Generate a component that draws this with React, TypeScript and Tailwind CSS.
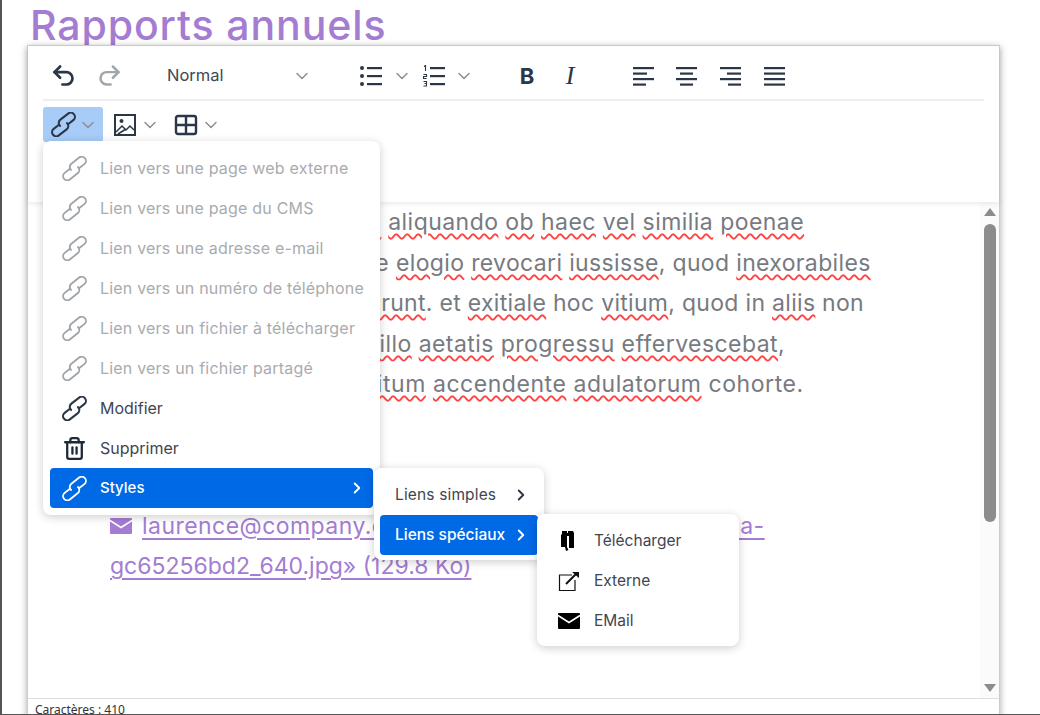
import { ChevronDown, ChevronRight, Redo2, Trash2, Undo2 } from "lucide-react";

const disabledLinks = [
  "Lien vers une page web externe",
  "Lien vers une page du CMS",
  "Lien vers une adresse e-mail",
  "Lien vers un numéro de téléphone",
  "Lien vers un fichier à télécharger",
  "Lien vers un fichier partagé",
];

function Chevron({ className = "" }: { className?: string }) {
  return <ChevronDown size={20} strokeWidth={1.75} className={"shrink-0 text-[#8a8f96] " + className} />;
}

// chain drawn flat, then turned on the diagonal
function LinkIcon({ className = "", strokeWidth = 2 }: { className?: string; strokeWidth?: number }) {
  return (
    <svg width="25" height="25" viewBox="0 0 24 24" fill="none" stroke="currentColor" strokeWidth={strokeWidth} strokeLinecap="round" className={"shrink-0 " + className}>
      <g transform="rotate(-38 12 12)">
        <path d="M8 9.5H2a4 4 0 0 0 0 8h9.5a4 4 0 0 0 4-4V13" />
        <path d="M16 14.5h6a4 4 0 0 0 0-8H12.5a4 4 0 0 0-4 4v.5" />
      </g>
    </svg>
  );
}

function BulletIcon() {
  return (
    <svg width="24" height="22" viewBox="0 0 24 22" fill="#2b3746" className="shrink-0">
      <circle cx="3" cy="3" r="2" />
      <circle cx="3" cy="11" r="2" />
      <circle cx="3" cy="19" r="2" />
      <rect x="8" y="2" width="15" height="2.2" />
      <rect x="8" y="10" width="15" height="2.2" />
      <rect x="8" y="18" width="15" height="2.2" />
    </svg>
  );
}

function NumberIcon() {
  return (
    <svg width="24" height="22" viewBox="0 0 24 22" className="shrink-0">
      <path d="M2 1.5l1.5-1V6M1.5 9.5h3v2h-3v2h3M1.5 16.5h3v2h-2 2v2.5h-3" fill="none" stroke="#2b3746" strokeWidth="1.1" />
      <rect x="8" y="2" width="15" height="2.2" fill="#2b3746" />
      <rect x="8" y="10" width="15" height="2.2" fill="#2b3746" />
      <rect x="8" y="18" width="15" height="2.2" fill="#2b3746" />
    </svg>
  );
}

// four bars, x offsets change with the alignment
function AlignIcon({ bars, className = "" }: { bars: [number, number][]; className?: string }) {
  return (
    <svg width="22" height="20" viewBox="0 0 22 20" className={"shrink-0 text-[#2b3746] " + className}>
      {bars.map(([x, w], i) => (
        <rect key={i} x={x} y={1 + i * 5.5} width={w} height="2.2" fill="currentColor" />
      ))}
    </svg>
  );
}

function ImageIcon() {
  return (
    <svg width="24" height="24" viewBox="0 0 24 24" fill="none" stroke="#2b3746" strokeWidth="2" className="shrink-0">
      <rect x="2" y="2" width="20" height="20" />
      <circle cx="8.5" cy="8" r="2" fill="#2b3746" stroke="none" />
      <path d="M3 19l6-6 4 4 4-4 4 4M5 21l8-5" strokeWidth="1.5" />
    </svg>
  );
}

function TableIcon() {
  return (
    <svg width="24" height="24" viewBox="0 0 24 24" fill="none" stroke="#2b3746" strokeWidth="2.4" className="shrink-0">
      <rect x="2" y="3" width="20" height="18" rx="2" />
      <path d="M2 12h20M12 3v18" />
    </svg>
  );
}

function DownloadIcon() {
  return (
    <svg width="20" height="20" viewBox="0 0 20 20" className="shrink-0">
      <path d="M4 0h5v2h1V0h5l1 2v15h-5V5H9v11l1.5 3-2.5 1-1-4H3V4l1-1z" fill="#000" />
    </svg>
  );
}

function ExternalIcon() {
  return (
    <svg width="22" height="22" viewBox="0 0 22 22" fill="none" stroke="#111" className="shrink-0">
      <path d="M14 5H1.5v15.5H17V10" strokeWidth="1.2" />
      <path d="M8 14L18 4" strokeWidth="2" />
      <path d="M14 2h7v6z" fill="#111" stroke="none" />
    </svg>
  );
}

function MailIcon({ color, className = "" }: { color: string; className?: string }) {
  return (
    <svg width="22" height="16" viewBox="0 0 22 16" className={"shrink-0 " + className}>
      <rect width="22" height="16" rx="1" fill={color} />
      <path d="M0 2.5l11 7 11-7" fill="none" stroke="#fff" strokeWidth="1.6" />
    </svg>
  );
}

function Wavy({ children }: { children: string }) {
  return <span className="underline decoration-wavy decoration-[#f44] decoration-[1.5px] underline-offset-[3px]">{children}</span>;
}

export default function App() {
  return (
    <div className="relative h-[715px] w-[1040px] overflow-hidden border-b border-l-2 border-[#555] bg-white font-['Inter',sans-serif]">
      <h1 className="h-[45px] pl-[28px] text-[41px] leading-[50px] font-medium tracking-[0.9px] text-[#a47cd2]">
        Rapports annuels
      </h1>

      <div className="relative ml-[25px] flex h-[680px] w-[973px] flex-col border border-[#ccc] shadow-[0_2px_7px_rgba(0,0,0,0.35)]">
        {/* Toolbar */}
        <div className="z-10 h-[156px] shrink-0 bg-white px-[15px] shadow-[0_2px_5px_rgba(0,0,0,0.08)]">
          <div className="flex h-[55px] items-center border-b-2 border-[#eee] pt-[6px]">
            <Undo2 size={27} strokeWidth={2.4} className="ml-[7px] shrink-0 text-[#2b3746]" />
            <Redo2 size={27} strokeWidth={2.2} className="ml-[19px] shrink-0 text-[#a1a6ab]" />
            <span className="ml-[44px] w-[125px] text-[16.5px] text-[#3d4854]">Normal</span>
            <Chevron />
            <div className="ml-[47px]"><BulletIcon /></div>
            <Chevron className="ml-[9px]" />
            <div className="ml-[10px]"><NumberIcon /></div>
            <Chevron className="ml-[8px]" />
            <span className="ml-[41px] w-6 text-center text-[22px] leading-none font-bold text-[#2b3746]">B</span>
            <span className="ml-[19px] w-6 text-center font-['Liberation_Serif',serif] text-[26px] leading-none text-[#2b3746] italic">
              I
            </span>
            <AlignIcon bars={[[0, 21], [0, 14], [0, 21], [0, 13]]} className="ml-[51px]" />
            <AlignIcon bars={[[0, 21], [4, 13], [0, 21], [4, 13]]} className="ml-[21px]" />
            <AlignIcon bars={[[0, 21], [7, 14], [0, 21], [8, 13]]} className="ml-[22px]" />
            <AlignIcon bars={[[0, 21], [0, 21], [0, 21], [0, 21]]} className="ml-[22px]" />
          </div>
          <div className="mt-[6px] flex h-[35px] items-center">
            <div className="flex h-[35px] w-[60px] items-center justify-between rounded-[3px] bg-[#a6ccf7] pr-[5px] pl-[8px]">
              <LinkIcon className="text-[#2b3746]" />
              <Chevron />
            </div>
            <div className="ml-[10px] flex items-center gap-[3px]">
              <ImageIcon />
              <Chevron />
            </div>
            <div className="ml-[14px] flex items-center gap-[3px]">
              <TableIcon />
              <Chevron />
            </div>
          </div>
        </div>

        {/* Content */}
        <div className="flex min-h-0 flex-1">
          <div className="flex-1 pl-[82px] text-[23px] leading-[40.5px] tracking-[0.45px] whitespace-nowrap text-[#777a80]">
            <p>
              <Wavy>Ideoque</Wavy> fertur <Wavy>neminem</Wavy> <Wavy>aliquando</Wavy> <Wavy>ob</Wavy> <Wavy>haec</Wavy>{" "}
              <Wavy>vel</Wavy> <Wavy>similia</Wavy> <Wavy>poenae</Wavy>
            </p>
            <p className="tracking-[0.35px]">
              <Wavy>addictum</Wavy> <Wavy>oblato</Wavy> de more <Wavy>elogio</Wavy> <Wavy>revocari</Wavy> <Wavy>iussisse</Wavy>,
              quod <Wavy>inexorabiles</Wavy>
            </p>
            <p className="tracking-[0.3px]">
              quoque <Wavy>principes</Wavy> <Wavy>factitarunt</Wavy>. et <Wavy>exitiale</Wavy> hoc <Wavy>vitium</Wavy>, quod in{" "}
              <Wavy>aliis</Wavy> non
            </p>
            <p>
              <Wavy>numquam</Wavy> <Wavy>intepescit</Wavy>, in <Wavy>illo</Wavy> <Wavy>aetatis</Wavy> <Wavy>progressu</Wavy>{" "}
              <Wavy>effervescebat</Wavy>,
            </p>
            <p className="tracking-[0.55px]">
              <Wavy>obstinatum</Wavy> <Wavy>eius</Wavy> <Wavy>propositum</Wavy> <Wavy>accendente</Wavy> <Wavy>adulatorum</Wavy>{" "}
              cohorte.
            </p>
            <div className="mt-[101px] text-[#a47cd2]">
              <p className="flex items-center">
                <MailIcon color="#a47cd2" className="mr-[10px]" />
                <span className="underline underline-offset-[4px]">laurence@company.com</span>
                <span className="ml-[10px] underline underline-offset-[4px]">Fichier : «nature-photo-hd-a-</span>
              </p>
              <p className="tracking-normal underline underline-offset-[4px]">gc65256bd2_640.jpg» (129.8 Ko)</p>
            </div>
          </div>
          <div className="flex w-[19px] shrink-0 flex-col items-center bg-[#fbfbfb] pt-[6px] pb-[6px]">
            <div className="h-0 w-0 border-x-[6px] border-b-[8px] border-x-transparent border-b-[#8c8c8c]" />
            <div className="mt-[8px] h-[298px] w-[12px] rounded-full bg-[#8c8c8c]" />
            <div className="mt-auto h-0 w-0 border-x-[6px] border-t-[8px] border-x-transparent border-t-[#8c8c8c]" />
          </div>
        </div>

        {/* Status bar */}
        <div className="h-[26px] shrink-0 border-t border-[#ddd] pl-[7px] font-['Noto_Sans',sans-serif] text-[12px] leading-[22px] text-[#333]">
          Caractères : 410
        </div>

        {/* Link menu */}
        <div className="absolute top-[95px] left-[15px] z-20 flex h-[374px] w-[337px] flex-col rounded-lg bg-white px-[7px] pt-[7px] shadow-[0_2px_10px_rgba(0,0,0,0.2)]">
          {disabledLinks.map((label) => (
            <div key={label} className="flex h-10 shrink-0 items-center gap-[13px] pl-[12px] text-[#a9abaf]">
              <LinkIcon strokeWidth={1.75} className="text-[#a0a4a8]" />
              <span className="text-[16px] tracking-[0.2px] whitespace-nowrap">{label}</span>
            </div>
          ))}
          <div className="flex h-10 shrink-0 items-center gap-[13px] pl-[12px] text-[#3f4650]">
            <LinkIcon className="text-[#2b3746]" />
            <span className="text-[16px]">Modifier</span>
          </div>
          <div className="flex h-10 shrink-0 items-center gap-[13px] pl-[12px] text-[#3f4650]">
            <Trash2 size={25} strokeWidth={2.2} className="text-[#1f2a38]" />
            <span className="text-[16px]">Supprimer</span>
          </div>
          <div className="flex h-10 shrink-0 items-center gap-[13px] rounded bg-[#0069e6] pr-[7px] pl-[12px] text-white">
            <LinkIcon strokeWidth={1.75} />
            <span className="flex-1 text-[15px] font-medium">Styles</span>
            <ChevronRight size={18} strokeWidth={2.5} />
          </div>
        </div>

        {/* Styles submenu */}
        <div className="absolute top-[422px] left-[346px] z-20 h-[92px] w-[170px] rounded-lg bg-white px-[6px] pt-[7px] shadow-[0_2px_10px_rgba(0,0,0,0.2)]">
          <div className="flex h-10 items-center justify-between pr-[8px] pl-[15px] text-[#3f4650]">
            <span className="text-[15.5px] tracking-[0.15px]">Liens simples</span>
            <ChevronRight size={18} strokeWidth={2.5} className="text-[#2b3746]" />
          </div>
          <div className="flex h-10 items-center justify-between rounded bg-[#0069e6] pr-[8px] pl-[15px] text-white">
            <span className="text-[15.5px] font-medium whitespace-nowrap">Liens spéciaux</span>
            <ChevronRight size={18} strokeWidth={2.5} />
          </div>
        </div>

        {/* Special links submenu */}
        <div className="absolute top-[468px] left-[509px] z-30 h-[132px] w-[202px] rounded-lg bg-white pt-[7px] pl-[21px] shadow-[0_2px_10px_rgba(0,0,0,0.2)]">
          <div className="flex h-10 items-center text-[#3f4650]">
            <div className="flex w-[36px] shrink-0"><DownloadIcon /></div>
            <span className="text-[15.5px]">Télécharger</span>
          </div>
          <div className="flex h-10 items-center text-[#3f4650]">
            <div className="flex w-[36px] shrink-0"><ExternalIcon /></div>
            <span className="text-[15.5px]">Externe</span>
          </div>
          <div className="flex h-10 items-center text-[#3f4650]">
            <div className="flex w-[36px] shrink-0"><MailIcon color="#000" /></div>
            <span className="text-[15.5px]">EMail</span>
          </div>
        </div>
      </div>
    </div>
  );
}
